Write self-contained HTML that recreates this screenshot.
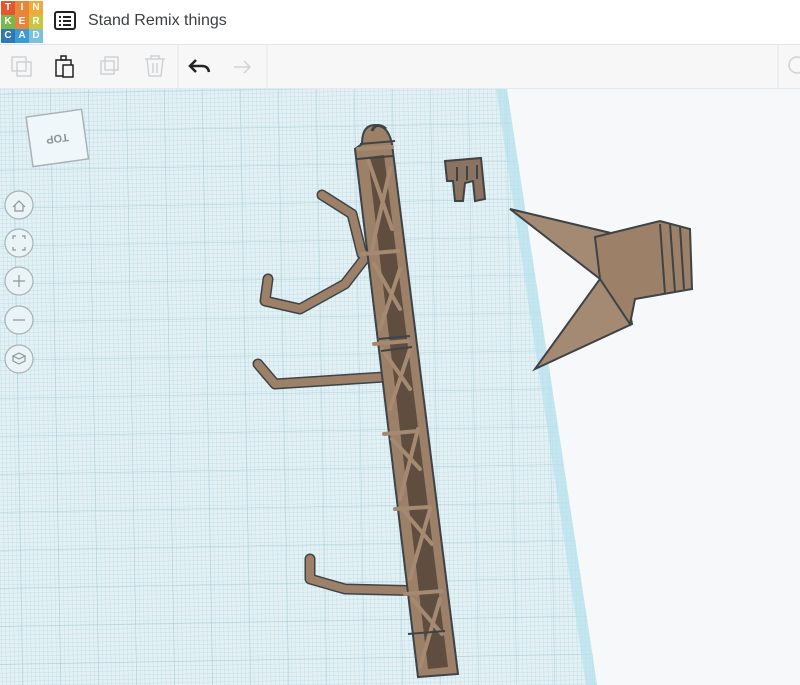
<!DOCTYPE html>
<html><head><meta charset="utf-8"><style>
body{margin:0;width:800px;height:685px;overflow:hidden;background:#f7f8f9;font-family:"Liberation Sans",sans-serif;position:relative}
.hdr{position:absolute;left:0;top:0;width:800px;height:44px;background:#fff;border-bottom:1px solid #e2e5e8}
.logo{position:absolute;left:1px;top:1px;display:grid;grid-template-columns:repeat(3,14px);}
.logo span{width:14px;height:14px;color:#fff;font-size:10px;font-weight:bold;text-align:center;line-height:14px}
.title{position:absolute;left:88px;top:12px;font-size:16px;color:#3c3f42}
.tb{position:absolute;left:0;top:45px;width:800px;height:43px;background:#f7f7f8;border-bottom:1px solid #e6e8ea}
</style></head><body>
<div class="hdr">
<div class="logo">
<span style="background:#e4572e">T</span><span style="background:#e8853a">I</span><span style="background:#f0a93b">N</span>
<span style="background:#79b84a">K</span><span style="background:#e8853a">E</span><span style="background:#c9c53d">R</span>
<span style="background:#2f78b8">C</span><span style="background:#3a9bd5">A</span><span style="background:#7cc0e0">D</span>
</div>
<svg style="position:absolute;left:54px;top:11px" width="22" height="20"><rect x="1" y="1" width="20" height="17" rx="2" fill="none" stroke="#222" stroke-width="2"/><rect x="5" y="5" width="2" height="2" fill="#222"/><rect x="9" y="5" width="8" height="2" fill="#222"/><rect x="5" y="9" width="2" height="2" fill="#222"/><rect x="9" y="9" width="8" height="2" fill="#222"/><rect x="5" y="13" width="2" height="2" fill="#222"/><rect x="9" y="13" width="8" height="2" fill="#222"/></svg>
<div class="title">Stand Remix things</div>
</div>
<div class="tb">
<svg width="800" height="43">
<g fill="none" stroke="#cfd3d6" stroke-width="1.5">
<rect x="12" y="12" width="14" height="14"/><rect x="17" y="17" width="14" height="14"/>
<rect x="101" y="16" width="13" height="13"/><rect x="105" y="12" width="13" height="13"/>
<path d="M145 14h20M151 14v-3h8v3M147 14l2 17h12l2-17M153 18v10M157 18v10"/>
<path d="M234 22h16M244 16l6 6-6 6"/>
</g>
<g fill="none" stroke="#222" stroke-width="1.5"><rect x="56" y="15" width="15" height="16"/><rect x="61" y="11" width="5" height="4"/><rect x="63" y="20" width="10" height="12" fill="#f7f7f8"/></g>
<path d="M190 21h12q6 0 7 6M196 15l-6 6 6 6" fill="none" stroke="#222" stroke-width="2.5"/>
<line x1="178" y1="0" x2="178" y2="43" stroke="#e3e5e7"/>
<line x1="267" y1="0" x2="267" y2="43" stroke="#e3e5e7"/>
<line x1="778" y1="0" x2="778" y2="43" stroke="#e3e5e7"/>
<circle cx="797" cy="20" r="8" fill="none" stroke="#cfd3d6" stroke-width="1.5"/>
</svg>
</div>
<svg style="position:absolute;left:0;top:89px" width="800" height="596">
<defs>
<pattern id="f" width="4.2" height="4.2" patternUnits="userSpaceOnUse" patternTransform="rotate(-1)"><path d="M0 0H4.2M0 0V4.2" stroke="#b9d9e3" stroke-width="0.7" fill="none"/></pattern>
<pattern id="m" width="38" height="38" patternUnits="userSpaceOnUse" patternTransform="rotate(-1) translate(12,5)"><path d="M0 0H38M0 0V38" stroke="#9cc6d3" stroke-width="0.8" fill="none"/></pattern>
</defs>
<polygon points="0,0 507,0 597,596 0,596" fill="#e3f1f5"/>
<polygon points="0,0 507,0 597,596 0,596" fill="url(#f)"/>
<polygon points="0,0 507,0 597,596 0,596" fill="url(#m)"/>
<polygon points="496,0 507,0 597,596 586,596" fill="#b6e1ee" opacity="0.7"/>
<g transform="rotate(-8 57 47)"><rect x="29" y="24" width="56" height="50" fill="#f0f7fa" stroke="#a7b3b8" stroke-width="1.5"/><text x="57" y="54" font-size="11" fill="#8a9499" text-anchor="middle" transform="rotate(180 57 50)" font-weight="bold">TOP</text></g>
<g fill="#eaf4f7" stroke="#a7b3b8" stroke-width="1.2">
<circle cx="19" cy="116" r="14"/><circle cx="19" cy="154" r="14"/><circle cx="19" cy="192" r="14"/><circle cx="19" cy="231" r="14"/><circle cx="19" cy="270" r="14"/>
</g>
<g fill="none" stroke="#8e979b" stroke-width="1.2"><path d="M13 118l6-6 6 6M15 116v6h8v-6"/><path d="M13 150v-3h3M22 147h3v3M25 158v3h-3M16 161h-3v-3"/><path d="M13 192h12M19 186v12"/><path d="M13 231h12"/><path d="M19 264l6 3-6 3-6-3zM13 267v5l6 3 6-3v-5"/></g>
<g stroke-linecap="round" stroke-linejoin="round" fill="none">
<g stroke="#3e4347" stroke-width="11">
<path d="M322 106 L352 125 L362 165"/>
<path d="M268 190 L265 212 L300 220 L345 195 L372 160"/>
<path d="M258 275 L275 295 L385 288"/>
<path d="M310 470 L310 490 L345 500 L432 502"/>
</g>
<g stroke="#9c8168" stroke-width="8">
<path d="M322 106 L352 125 L362 165"/>
<path d="M268 190 L265 212 L300 220 L345 195 L372 160"/>
<path d="M258 275 L275 295 L385 288"/>
<path d="M310 470 L310 490 L345 500 L432 502"/>
</g>
</g>
<path d="M362 55 Q362 36 375 36 Q388 36 392 55 L458 585 L418 588 L355 60 Z" fill="#9c8168" stroke="#3e4347" stroke-width="2"/>
<path d="M368 68 L384 66 L448 578 L428 580 Z" fill="#5f4e40"/>
<g stroke="#a58a71" stroke-width="4" stroke-linecap="round">
<path d="M368 70 L392 140 M390 80 L372 160 M374 175 L400 220 M400 180 L380 240 M382 260 L410 300 M410 260 L390 320 M392 350 L420 380 M418 340 L400 410 M402 420 L432 455 M430 420 L410 490 M412 510 L442 545 M440 510 L420 578"/>
<path d="M358 60 L392 58 M362 165 L398 162 M374 255 L408 252 M384 345 L418 342 M395 420 L430 418 M405 505 L442 502"/>
</g>
<g stroke="#3e4347" stroke-width="2" fill="none"><path d="M360 55 L395 52 M357 70 L393 67 M379 250 L410 247 M381 262 L412 258 M408 545 L445 542"/></g>
<path d="M372 42 Q376 32 386 40" stroke="#3e4347" stroke-width="3" fill="none"/>
<g transform="translate(445,72)"><path d="M0 0 L36 -3 L40 38 L30 40 L28 20 L20 22 L18 40 L10 40 L8 20 L2 20Z" fill="#8a7360" stroke="#3e4347" stroke-width="2"/><path d="M12 6v14M22 5v14M32 4v14" stroke="#3e4347" stroke-width="2"/></g>
<polygon points="510,120 615,145 632,235 535,280 600,190" fill="#a48a72" stroke="#3e4347" stroke-width="2"/>
<polygon points="595,148 660,132 690,140 692,200 635,210 630,235 600,190" fill="#9c8168" stroke="#3e4347" stroke-width="2"/>
<path d="M660 135 L665 205 M670 135 L675 203 M680 138 L684 200" stroke="#3e4347" stroke-width="2"/>
</svg>
</body></html>
